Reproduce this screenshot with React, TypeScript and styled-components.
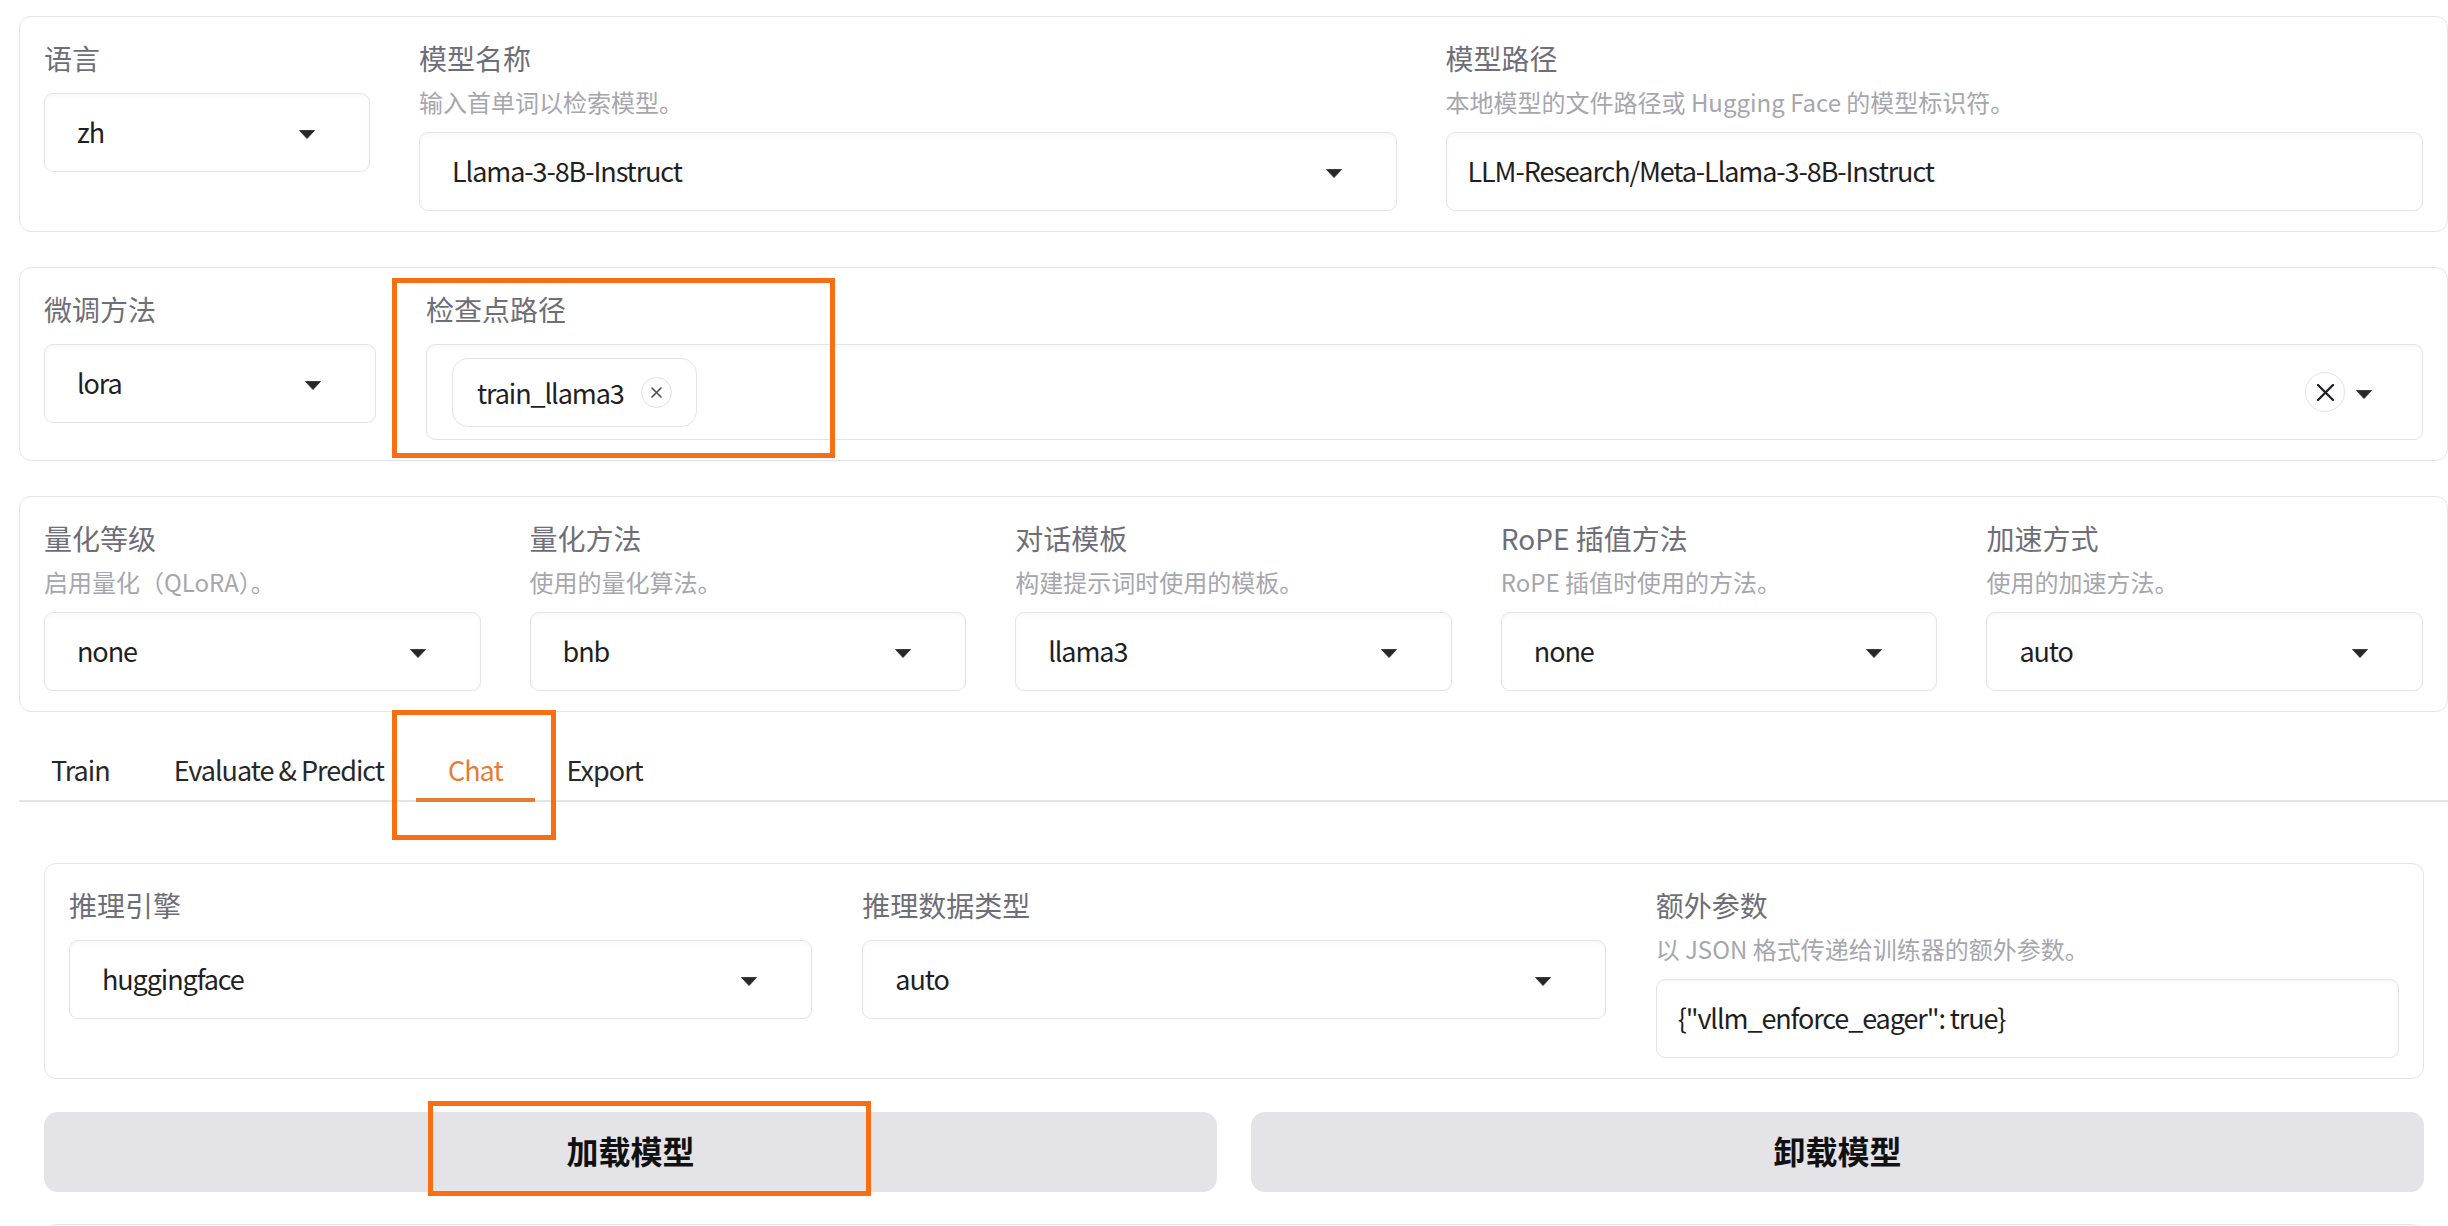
import styled, { createGlobalStyle } from 'styled-components';

const GlobalStyle = createGlobalStyle`
  html, body {
    margin: 0;
    padding: 0;
    background: #ffffff;
    overflow: hidden;
  }
  * {
    box-sizing: border-box;
  }
  body {
    font-family: "Noto Sans CJK SC", "Source Sans Pro", "Noto Sans", sans-serif;
    color: #1f1f23;
  }
`;

const Page = styled.main`
  position: relative;
  width: 2448px;
  height: 1226px;
  overflow: hidden;
  padding: 16px 0 0 19px;
  display: flex;
  flex-direction: column;
  gap: 35px;
`;

const Card = styled.section`
  background: #ffffff;
  border: 1px solid #e4e4e7;
  border-radius: 12px;
  padding: 23px 24px 20px 24px;
`;

const Row = styled.div<{ $cols: string; $gap: number }>`
  display: grid;
  grid-template-columns: ${({ $cols }) => $cols};
  column-gap: ${({ $gap }) => $gap}px;
  align-items: start;
`;

const Field = styled.div`
  display: flex;
  flex-direction: column;
  min-width: 0;
`;

const Label = styled.span`
  display: block;
  font-size: 28px;
  line-height: 36px;
  color: #6e6e78;
`;

const Info = styled.span`
  display: block;
  margin: 10px 0 -3px;
  font-size: 24px;
  line-height: 32px;
  color: #a6a6ae;
  white-space: nowrap;
`;

const InputBox = styled.div<{ $height?: number }>`
  margin-top: 17px;
  height: ${({ $height }) => $height ?? 79}px;
  display: flex;
  align-items: center;
  background: #ffffff;
  border: 1px solid #e4e4e7;
  border-radius: 9px;
  box-shadow: inset 0 2px 4px rgba(0, 0, 0, 0.03);
  font-size: 27px;
  letter-spacing: -1.1px;
  color: #1f1f23;
`;

const Dropdown = styled(InputBox)`
  padding: 0 54px 2px 32px;
`;

const Textbox = styled(InputBox)`
  padding: 0 20px 2px 21px;
`;

const MultiBox = styled(InputBox)`
  padding: 0 50px 0 25px;
`;

const Value = styled.span`
  flex: 1;
  white-space: nowrap;
  overflow: hidden;
`;

const CaretIcon = styled.svg`
  flex: none;
  width: 16px;
  height: 9px;
  margin-top: 5px;
`;

const Caret = () => (
  <CaretIcon viewBox="0 0 16 9" aria-hidden="true">
    <path d="M0.5 0.5h15L8 8.6z" fill="#27272a" stroke="#27272a" strokeWidth="0.8" strokeLinejoin="round" />
  </CaretIcon>
);

const Chip = styled.div`
  display: flex;
  align-items: center;
  gap: 17px;
  height: 69px;
  padding: 0 24px 0 24px;
  border: 1px solid #e4e4e7;
  border-radius: 16px;
  background: #ffffff;
  font-size: 27px;
  letter-spacing: -1.1px;
  color: #1f1f23;
`;

const Spacer = styled.div`
  flex: 1;
`;

const CircleX = styled.span<{ $size: number }>`
  flex: none;
  display: flex;
  align-items: center;
  justify-content: center;
  width: ${({ $size }) => $size}px;
  height: ${({ $size }) => $size}px;
  border-radius: 50%;
  border: 1.5px solid #e2e2e6;
  background: #ffffff;

  svg {
    display: block;
  }
`;

const Cross = ({ size, stroke, color }: { size: number; stroke: number; color: string }) => (
  <svg width={size} height={size} viewBox={`0 0 ${size} ${size}`} aria-hidden="true">
    <path d={`M1 1L${size - 1} ${size - 1}M${size - 1} 1L1 ${size - 1}`} stroke={color} strokeWidth={stroke} strokeLinecap="round" />
  </svg>
);

const ClearGroup = styled.div`
  display: flex;
  align-items: center;
  gap: 11px;
`;

const Tabs = styled.div`
  display: flex;
  flex-direction: column;
`;

const TabNav = styled.nav`
  display: flex;
  border-bottom: 2px solid #e4e4e7;
  margin-top: -1px;
`;

const TabButton = styled.button<{ $active?: boolean }>`
  position: relative;
  height: 54px;
  padding: 0 32px 6px;
  border: none;
  background: transparent;
  font-family: inherit;
  font-size: 27px;
  letter-spacing: -1px;
  line-height: 48px;
  color: ${({ $active }) => ($active ? '#ea7b33' : '#27272a')};
  cursor: pointer;

  ${({ $active }) =>
    $active &&
    `
    &::after {
      content: '';
      position: absolute;
      left: 0;
      right: 0;
      bottom: -2px;
      height: 4px;
      background: #e97a32;
    }
  `}
`;

const TabPanel = styled.div`
  display: flex;
  flex-direction: column;
  gap: 34px;
  padding: 61px 24px 0 25px;
`;

const ButtonRow = styled.div`
  display: grid;
  grid-template-columns: 1fr 1fr;
  column-gap: 34px;
  margin-top: -1px;
  margin-bottom: -2px;
`;

const ActionButton = styled.button`
  height: 80px;
  padding: 0 0 4px;
  border: none;
  border-radius: 14px;
  background: #e4e4e8;
  font-family: inherit;
  font-size: 32px;
  font-weight: 700;
  color: #111111;
  cursor: pointer;
`;

const NextCard = styled.div`
  flex: none;
  height: 40px;
  border: 1px solid #e4e4e7;
  border-radius: 12px;
`;

const Highlight = styled.div<{ $x: number; $y: number; $w: number; $h: number }>`
  position: absolute;
  left: ${({ $x }) => $x}px;
  top: ${({ $y }) => $y}px;
  width: ${({ $w }) => $w}px;
  height: ${({ $h }) => $h}px;
  border: 5px solid #f76e13;
  pointer-events: none;
`;

const quantFields = [
  { label: '量化等级', info: '启用量化（QLoRA）。', value: 'none' },
  { label: '量化方法', info: '使用的量化算法。', value: 'bnb' },
  { label: '对话模板', info: '构建提示词时使用的模板。', value: 'llama3' },
  { label: 'RoPE 插值方法', info: 'RoPE 插值时使用的方法。', value: 'none' },
  { label: '加速方式', info: '使用的加速方法。', value: 'auto' },
];

const tabs = ['Train', 'Evaluate & Predict', 'Chat', 'Export'];

export default function App() {
  return (
    <>
      <GlobalStyle />
      <Page>
        <Card>
          <Row $cols="326px 1fr 1fr" $gap={49}>
            <Field>
              <Label>语言</Label>
              <Dropdown>
                <Value>zh</Value>
                <Caret />
              </Dropdown>
            </Field>
            <Field>
              <Label>模型名称</Label>
              <Info>输入首单词以检索模型。</Info>
              <Dropdown>
                <Value>Llama-3-8B-Instruct</Value>
                <Caret />
              </Dropdown>
            </Field>
            <Field>
              <Label>模型路径</Label>
              <Info>本地模型的文件路径或 Hugging Face 的模型标识符。</Info>
              <Textbox>
                <Value>LLM-Research/Meta-Llama-3-8B-Instruct</Value>
              </Textbox>
            </Field>
          </Row>
        </Card>

        <Card>
          <Row $cols="332px 1fr" $gap={50}>
            <Field>
              <Label>微调方法</Label>
              <Dropdown>
                <Value>lora</Value>
                <Caret />
              </Dropdown>
            </Field>
            <Field>
              <Label>检查点路径</Label>
              <MultiBox $height={96}>
                <Chip>
                  train_llama3
                  <CircleX $size={31}>
                    <Cross size={11} stroke={1.6} color="#4a4a50" />
                  </CircleX>
                </Chip>
                <Spacer />
                <ClearGroup>
                  <CircleX $size={40}>
                    <Cross size={17} stroke={2.3} color="#1f1f23" />
                  </CircleX>
                  <Caret />
                </ClearGroup>
              </MultiBox>
            </Field>
          </Row>
        </Card>

        <Card>
          <Row $cols="repeat(5, 1fr)" $gap={49}>
            {quantFields.map((f) => (
              <Field key={f.label}>
                <Label>{f.label}</Label>
                <Info>{f.info}</Info>
                <Dropdown>
                  <Value>{f.value}</Value>
                  <Caret />
                </Dropdown>
              </Field>
            ))}
          </Row>
        </Card>

        <Tabs>
          <TabNav>
            {tabs.map((t) => (
              <TabButton key={t} $active={t === 'Chat'}>
                {t}
              </TabButton>
            ))}
          </TabNav>
          <TabPanel>
            <Card>
              <Row $cols="repeat(3, 1fr)" $gap={50}>
                <Field>
                  <Label>推理引擎</Label>
                  <Dropdown>
                    <Value>huggingface</Value>
                    <Caret />
                  </Dropdown>
                </Field>
                <Field>
                  <Label>推理数据类型</Label>
                  <Dropdown>
                    <Value>auto</Value>
                    <Caret />
                  </Dropdown>
                </Field>
                <Field>
                  <Label>额外参数</Label>
                  <Info>以 JSON 格式传递给训练器的额外参数。</Info>
                  <Textbox>
                    <Value>{'{"vllm_enforce_eager": true}'}</Value>
                  </Textbox>
                </Field>
              </Row>
            </Card>
            <ButtonRow>
              <ActionButton>加载模型</ActionButton>
              <ActionButton>卸载模型</ActionButton>
            </ButtonRow>
            <NextCard />
          </TabPanel>
        </Tabs>

        <Highlight $x={392} $y={278} $w={443} $h={180} />
        <Highlight $x={392} $y={710} $w={164} $h={130} />
        <Highlight $x={428} $y={1101} $w={443} $h={95} />
      </Page>
    </>
  );
}
